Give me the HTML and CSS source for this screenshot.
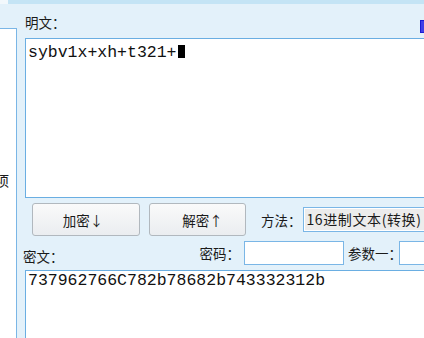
FILE: index.html
```html
<!DOCTYPE html>
<html lang="zh-CN">
  <head>
    <meta charset="UTF-8" />
    <meta name="viewport" content="width=device-width, initial-scale=1.0" />
    <title>加密解密</title>
    <link rel="stylesheet" href="styles.css">
  </head>
  <body>
    <div class="topbar"><span class="tab"></span></div>

    <div class="main">
      <div class="side">
        <span class="side-a">项</span>
        <span class="side-b">：</span>
      </div>

      <div class="content">
        <div class="label-row">
          <span class="label">明文：</span>
          <span class="link-mark"></span>
        </div>

        <div class="box plain">sybv1x+xh+t321+<span class="caret"></span></div>

        <div class="btn-row">
          <button class="btn btn-enc">加密↓</button>
          <button class="btn btn-dec">解密↑</button>
          <span class="label method">方法：</span>
          <div class="select">16进制文本(转换)</div>
        </div>

        <div class="field-row">
          <span class="label cipher-label">密文：</span>
          <span class="label pwd-label">密码：</span>
          <div class="input pwd"></div>
          <span class="label arg-label">参数一：</span>
          <div class="input arg"></div>
        </div>

        <div class="box cipher">737962766C782b78682b743332312b</div>
      </div>
    </div>
  </body>
</html>
```

FILE: styles.css
```css
body {
  margin: 0;
  width: 424px;
  height: 338px;
  overflow: hidden;
  background: #e3f1fa;
  font-family: "Noto Sans CJK SC", "Noto Sans", sans-serif;
  color: #1a1a1a;
}

.topbar {
  height: 4px;
  background: #c4e4f5;
}

.topbar .tab {
  display: block;
  width: 8px;
  height: 4px;
  background: #f2f8fc;
}

.main {
  display: flex;
  height: 334px;
}

.side {
  flex-shrink: 0;
  width: 16px;
  margin-top: 24px;
  background: #fff;
  border-top: 1px solid #7ab6e6;
  border-right: 1px solid #7ab6e6;
  overflow: hidden;
  position: relative;
  font-size: 14px;
}

.side-a {
  position: absolute;
  left: -5px;
  top: 141px;
}

.side-b {
  position: absolute;
  left: -6px;
  top: 192px;
}

.content {
  flex: 1;
  padding-left: 8px;
  overflow: hidden;
}

.label {
  flex-shrink: 0;
  font-size: 13.5px;
  line-height: 16px;
  white-space: nowrap;
}

.label-row {
  display: flex;
  justify-content: space-between;
  align-items: center;
  height: 34px;
  padding-top: 2px;
  box-sizing: border-box;
}

.link-mark {
  width: 5px;
  height: 11px;
  margin-right: -3px;
  margin-top: 8px;
  background: #3f3fe8;
  border: 1px solid #1b1bd0;
}

.box {
  background: #fff;
  border: 1px solid #6aaee2;
  width: 420px;
  box-sizing: border-box;
  font-family: "Liberation Mono", "DejaVu Sans Mono", monospace;
  font-size: 16.5px;
  line-height: 20px;
  padding: 3px 2px;
  color: #111;
  white-space: nowrap;
}

.plain {
  height: 160px;
  padding-top: 4px;
}

.caret {
  display: inline-block;
  width: 7px;
  height: 13px;
  margin-left: 1px;
  background: #000;
  vertical-align: -1px;
}

.btn-row {
  display: flex;
  align-items: center;
  margin-top: 5px;
  height: 33px;
}

.btn {
  flex-shrink: 0;
  height: 33px;
  font-family: inherit;
  font-size: 13.5px;
  color: #1a1a1a;
  border: 1px solid #b1b8be;
  border-radius: 3px;
  background: linear-gradient(#fafafa, #eaedf0);
  padding: 0;
}

.btn-enc {
  width: 108px;
  margin-left: 7px;
  padding-right: 6px;
}

.btn-dec {
  width: 97px;
  margin-left: 9px;
  padding-left: 10px;
}

.method {
  margin-left: 15px;
}

.select {
  flex-shrink: 0;
  margin-left: 1px;
  height: 25px;
  width: 140px;
  box-sizing: border-box;
  border: 1px solid #7ab6e6;
  background: #ececec;
  box-shadow: inset 0 0 0 1px #fff;
  font-size: 14px;
  letter-spacing: 0.6px;
  line-height: 23px;
  padding-left: 3px;
  white-space: nowrap;
}

.field-row {
  display: flex;
  align-items: center;
  height: 24px;
  margin-top: 5px;
}

.cipher-label {
  margin-left: -2px;
  margin-top: 6px;
}

.pwd-label {
  margin-left: 136px;
}

.input {
  flex-shrink: 0;
  height: 24px;
  box-sizing: border-box;
  background: #fff;
  border: 1px solid #7ab6e6;
}

.pwd {
  width: 100px;
  margin-left: 4px;
}

.arg-label {
  margin-left: 4px;
  margin-right: -3px;
}

.arg {
  width: 40px;
}

.cipher {
  margin-top: 5px;
  height: 80px;
  padding-top: 0;
}
```
